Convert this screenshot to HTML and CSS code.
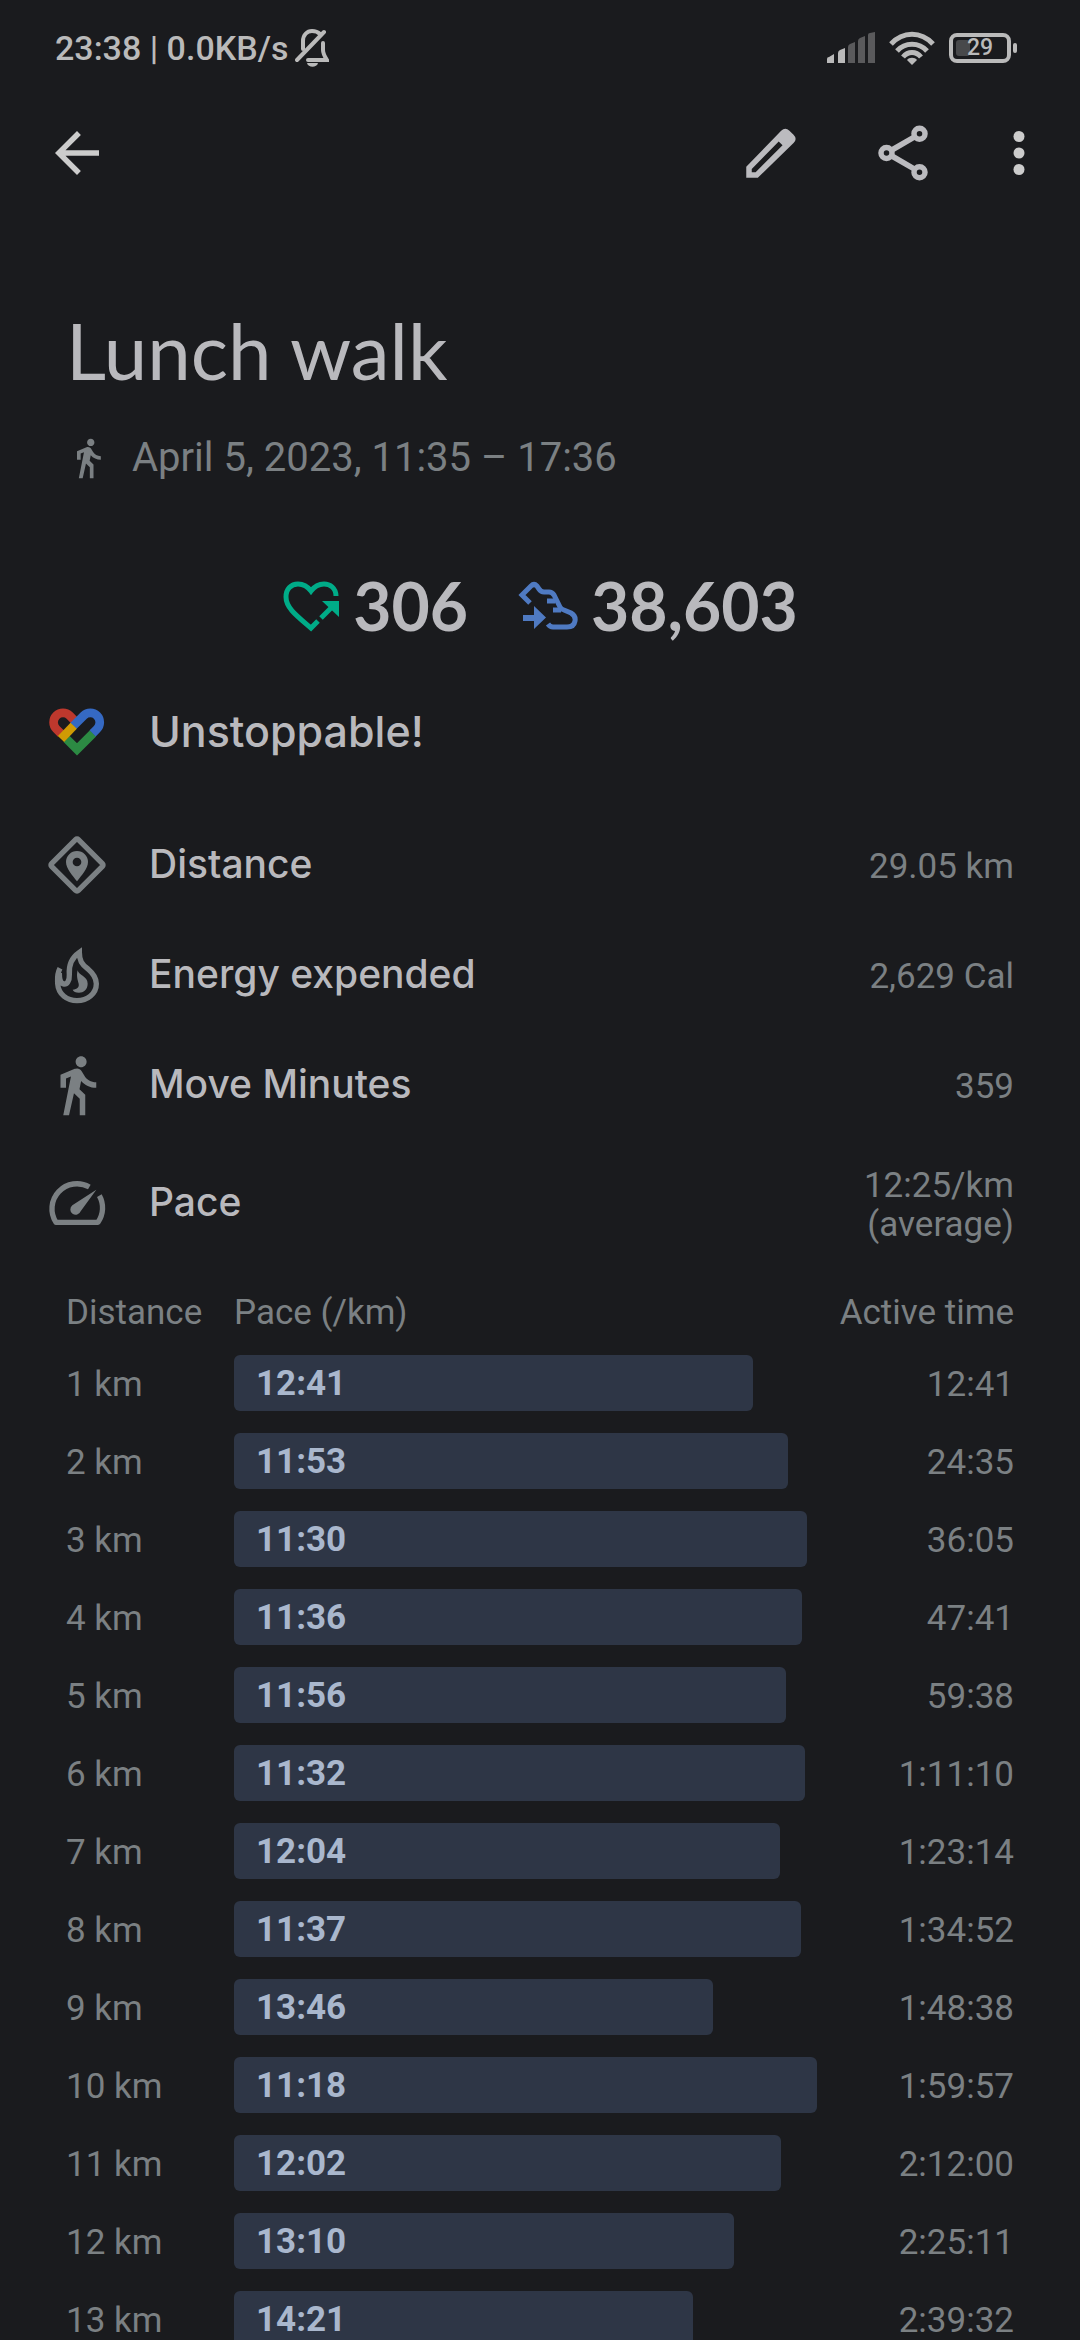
FILE: index.html
```html
<!DOCTYPE html>
<html lang="en">
<head>
    <meta charset="UTF-8">
    <meta name="viewport" content="width=device-width, initial-scale=1.0">
    <title>Lunch walk</title>
    <link rel="stylesheet" href="styles.css">
</head>
<body>
    <!-- Status Bar -->
    <div class="status-bar">
        <div class="status-left">
            <span>23:38 | 0.0KB/s</span>
            <svg class="bell" viewBox="294 29 34 38" fill="none" stroke="currentColor" stroke-width="4" stroke-linecap="round">
                <path d="M302 49V41C302 35 306 31 311 31C315 31 317 32 319 34" />
                <path d="M296 60L323 32" />
                <path d="M322 43V50C322 54 324 57 326 60H307" />
                <path d="M306 63h11c-1 5-10 5-11 0z" fill="currentColor" stroke="none" />
            </svg>
        </div>
        <div class="status-right">
            <svg class="signal" viewBox="0 0 48 32" fill="currentColor">
                <path d="M0 27Q0 25 2 25L7 22V31H0z" />
                <path d="M11 21Q11 19 13 18L18 16V31H11z" />
                <g opacity=".4">
                    <path d="M21 15Q21 13 23 12L28 10V31H21z" />
                    <path d="M31 9Q31 7 33 6L38 4V31H31z" />
                    <path d="M41 3Q41 1 43 1L48 0V31H41z" />
                </g>
            </svg>
            <svg class="wifi" viewBox="0 0 46 34" fill="none" stroke="currentColor" stroke-width="5">
                <path d="M2 13C14 0 32 0 44 13" />
                <path d="M8 20C16 11 30 11 38 20" />
                <path d="M14 26C19 20 27 20 32 26" />
                <path d="M18 29C20 26 26 26 28 29L23 34z" fill="currentColor" stroke="none" />
            </svg>
            <div class="battery"><span class="battery-level"></span><span class="battery-text">29</span></div>
        </div>
    </div>

    <!-- App Bar -->
    <nav class="app-bar">
        <button class="icon-button back" aria-label="Back">
            <svg class="icon" viewBox="0 0 24 24"><path d="M20 11H7.83l5.59-5.59L12 4l-8 8 8 8 1.41-1.41L7.83 13H20v-2z" /></svg>
        </button>
        <button class="icon-button edit" aria-label="Edit">
            <svg class="icon" viewBox="0 0 24 24"><path fill-rule="evenodd" d="M3 21V17L15.7 3.9Q17.2 2.4 18.7 3.9L20.2 5.4Q21.7 6.9 20.2 8.4L7.2 21zM5 17.8V19H6.4L16.2 9.2 14.8 7.8z" /></svg>
        </button>
        <button class="icon-button share" aria-label="Share">
            <svg class="icon" viewBox="0 0 24 24" fill="none" stroke="currentColor" stroke-width="2">
                <circle cx="6" cy="12" r="2" /><circle cx="18" cy="5" r="2" /><circle cx="18" cy="19" r="2" />
                <path d="M7.8 11L16.2 6.1M7.8 13L16.2 17.9" />
            </svg>
        </button>
        <button class="icon-button more" aria-label="More options">
            <svg class="icon" viewBox="0 0 24 24"><circle cx="12" cy="6" r="2" /><circle cx="12" cy="12" r="2" /><circle cx="12" cy="18" r="2" /></svg>
        </button>
    </nav>

    <main>
        <!-- Title -->
        <header class="activity-header">
            <h1>Lunch walk</h1>
            <div class="activity-date">
                <svg class="small-icon" viewBox="0 0 24 24"><path d="M13.5 5.5c1.1 0 2-.9 2-2s-.9-2-2-2-2 .9-2 2 .9 2 2 2zM9.8 8.9L7 23h2.1l1.8-8 2.1 2v6h2v-7.5l-2.1-2 .6-3C14.8 12 16.8 13 19 13v-2c-1.9 0-3.5-1-4.3-2.4l-1-1.6c-.4-.6-1-1-1.7-1-.3 0-.5.1-.8.1L6 8.3V13h2V9.6l1.8-.7" /></svg>
                <span>April 5, 2023, 11:35 – 17:36</span>
            </div>
        </header>

        <!-- Heart Points and Steps -->
        <div class="points">
            <div class="point">
                <svg class="heart-points" viewBox="0 0 58 52" fill="none" stroke="currentColor" stroke-width="5">
                    <path d="M54 16C54 8 48 4 42 4C36 4 32 7 29 11C26 7 22 4 16 4C9 4 4 9 4 17C4 28 15 36 29 48L36 41" />
                    <path d="M39 38L52 25" />
                    <path d="M40 21H57V37z" fill="currentColor" stroke="none" />
                </svg>
                <span>306</span>
            </div>
            <div class="point">
                <svg class="steps" viewBox="0 0 60 50" fill="none" stroke="currentColor" stroke-width="5">
                    <path d="M12 22L4 14L13 5Q16 2 19 5L21 8Q23 11 26 11H31Q34 11 36 14L42 26Q43 28 46 29L53 32Q58 35 57 40Q56 46 49 46H35Q32 46 30 43" />
                    <path d="M29 20H37M35 29H43" />
                    <path d="M5 34H16V25L28 36.5L16 48V40H5z" fill="currentColor" stroke="none" />
                </svg>
                <span>38,603</span>
            </div>
        </div>

        <!-- Metrics -->
        <section class="metrics">
            <div class="metric headline">
                <svg class="icon" viewBox="42 64 198 198" fill="none" stroke-width="26">
                    <path stroke="#bd382d" d="M93 168L79 154A28 28 0 0 1 119 114L133 128" />
                    <path stroke="#2c8a43" d="M110 184L141 215L189 167" />
                    <path stroke="#3569c3" d="M130 145L161 114A28 28 0 0 1 201 154L188 167" />
                    <path stroke="#d09b04" d="M131 144L93 184" />
                </svg>
                <h2>Unstoppable!</h2>
            </div>
            <div class="metric">
                <svg class="icon" viewBox="42 456 198 198">
                    <rect x="84" y="498" width="114" height="114" rx="6" transform="rotate(45 141 555)" fill="none" stroke="currentColor" stroke-width="16" />
                    <path fill-rule="evenodd" d="M141 604C128 587 108 566 108 546a33 33 0 0 1 66 0C174 566 154 587 141 604zM141 533a13 13 0 1 0 0 26a13 13 0 0 0 0-26z" />
                </svg>
                <h3>Distance</h3>
                <span class="value">29.05 km</span>
            </div>
            <div class="metric">
                <svg class="icon" viewBox="42 787 198 198">
                    <path fill="none" stroke="currentColor" stroke-width="16" d="M90 866C80 885 83 900 83 912C85 945 112 963 141 963C172 963 199 942 199 912C199 893 188 880 174 868C155 854 148 842 148 818C122 836 116 860 118 885C119 905 110 914 102 913C92 912 88 903 88 880" />
                    <path d="M143 872C146 887 173 890 173 912C173 930 160 939 147 939C137 939 130 935 128 930C142 928 148 922 146 912C144 903 138 890 143 872z" />
                </svg>
                <h3>Energy expended</h3>
                <span class="value">2,629 Cal</span>
            </div>
            <div class="metric">
                <svg class="icon" viewBox="0 0 24 24"><path d="M13.5 5.5c1.1 0 2-.9 2-2s-.9-2-2-2-2 .9-2 2 .9 2 2 2zM9.8 8.9L7 23h2.1l1.8-8 2.1 2v6h2v-7.5l-2.1-2 .6-3C14.8 12 16.8 13 19 13v-2c-1.9 0-3.5-1-4.3-2.4l-1-1.6c-.4-.6-1-1-1.7-1-.3 0-.5.1-.8.1L6 8.3V13h2V9.6l1.8-.7" /></svg>
                <h3>Move Minutes</h3>
                <span class="value">359</span>
            </div>
            <div class="metric pace">
                <svg class="icon" viewBox="42 480 198 198">
                    <path fill="none" stroke="currentColor" stroke-width="16" stroke-linejoin="round" d="M178 531A75 75 0 0 0 78 637H204A75 75 0 0 0 208 557" />
                    <path d="M199 539L152 604A16 16 0 1 1 127 586z" />
                </svg>
                <h3>Pace</h3>
                <span class="value">12:25/km<br>(average)</span>
            </div>
        </section>

        <!-- Splits -->
        <table class="splits">
            <thead>
                <tr>
                    <th class="col-distance">Distance</th>
                    <th>Pace (/km)</th>
                    <th class="col-time">Active time</th>
                </tr>
            </thead>
            <tbody id="splits-body">
                <!-- Split rows will be dynamically added here -->
            </tbody>
        </table>
    </main>

    <script>
        const splits = [
            { pace: "12:41", time: "12:41" },
            { pace: "11:53", time: "24:35" },
            { pace: "11:30", time: "36:05" },
            { pace: "11:36", time: "47:41" },
            { pace: "11:56", time: "59:38" },
            { pace: "11:32", time: "1:11:10" },
            { pace: "12:04", time: "1:23:14" },
            { pace: "11:37", time: "1:34:52" },
            { pace: "13:46", time: "1:48:38" },
            { pace: "11:18", time: "1:59:57" },
            { pace: "12:02", time: "2:12:00" },
            { pace: "13:10", time: "2:25:11" },
            { pace: "14:21", time: "2:39:32" },
        ];

        function toSeconds(pace) {
            const [min, sec] = pace.split(':').map(Number);
            return min * 60 + sec;
        }

        // The fastest split fills the whole column
        const fastest = Math.min(...splits.map(split => toSeconds(split.pace)));
        const splitsBody = document.getElementById('splits-body');
        splits.forEach((split, index) => {
            const width = fastest / toSeconds(split.pace) * 100;
            const row = splitsBody.insertRow();
            row.innerHTML = `
                <td>${index + 1} km</td>
                <td class="col-pace"><div class="bar" style="width: ${width}%">${split.pace}</div></td>
                <td class="col-time">${split.time}</td>
            `;
        });
    </script>
</body>
</html>
```
FILE: styles.css
```css
/* General Styles */
* {
    margin: 0;
    padding: 0;
    box-sizing: border-box;
}

body {
    background-color: #1a1b1e;
    color: #7b8083;
    font-family: Roboto, sans-serif;
    font-size: 35px;
    line-height: 39px;
    height: 100vh;
    overflow: hidden;
}

svg {
    display: block;
    flex-shrink: 0;
}

.icon {
    width: 66px;
    height: 66px;
    fill: currentColor;
}

.icon[fill="none"] {
    fill: none;
}

/* Status Bar */
.status-bar {
    display: flex;
    align-items: center;
    justify-content: space-between;
    height: 96px;
    padding: 0 63px 0 55px;
    color: #bababa;
    font-size: 34px;
    font-weight: 500;
}

.status-left {
    display: flex;
    align-items: center;
    gap: 7px;
}

.bell {
    width: 34px;
    height: 38px;
}

.status-right {
    display: flex;
    align-items: center;
    gap: 14px;
}

.signal {
    width: 48px;
    height: 32px;
}

.wifi {
    width: 46px;
    height: 34px;
}

.battery {
    position: relative;
    display: flex;
    align-items: center;
    justify-content: center;
    width: 62px;
    height: 30px;
    margin-right: 6px;
    border: 4px solid currentColor;
    border-radius: 8px;
    font-size: 23px;
    line-height: 24px;
}

.battery::after {
    content: '';
    position: absolute;
    right: -10px;
    top: 6px;
    width: 4px;
    height: 10px;
    border-radius: 2px;
    background: currentColor;
}

.battery-level {
    position: absolute;
    left: 3px;
    top: 3px;
    width: 14px;
    height: 16px;
    border-radius: 3px;
    background: #48494b;
}

.battery-text {
    position: relative;
}

/* App Bar */
.app-bar {
    display: flex;
    align-items: center;
    height: 114px;
    padding: 0 11px;
}

.icon-button {
    padding: 33px;
    background: transparent;
    border: none;
    color: #bbbbbf;
    cursor: pointer;
}

.icon-button.back {
    margin-right: auto;
    color: #cccccc;
}

.icon-button.more {
    padding: 33px 17px;
    color: #cccccc;
}

/* Title */
.activity-header {
    padding: 92px 66px 0;
}

h1,
.points {
    font-family: Lato, sans-serif;
    color: #b9b9bd;
}

h1 {
    font-size: 78px;
    font-weight: 400;
    line-height: 96px;
}

.activity-date {
    display: flex;
    align-items: center;
    gap: 22px;
    margin-top: 34px;
    font-size: 40px;
    line-height: 52px;
}

.small-icon {
    width: 44px;
    height: 44px;
    fill: currentColor;
}

/* Heart Points and Steps */
.points {
    display: flex;
    justify-content: center;
    gap: 50px;
    margin-top: 90px;
    font-size: 66px;
    font-weight: 700;
    line-height: 64px;
}

.point {
    display: flex;
    align-items: center;
    gap: 13px;
}

.heart-points {
    width: 58px;
    height: 52px;
    color: #00ac88;
}

.steps {
    width: 60px;
    height: 50px;
    color: #4f7ac2;
}

/* Metrics */
.metrics {
    margin-top: 39px;
    padding: 0 66px 0 44px;
}

.metric {
    display: flex;
    align-items: center;
    gap: 39px;
    height: 110px;
}

.metric.headline {
    margin-bottom: 23px;
}

.metric.pace {
    height: 126px;
}

h2,
h3 {
    padding-bottom: 2px;
    font-family: Inter, sans-serif;
    font-weight: 500;
    line-height: 52px;
    color: #b9b9bd;
}

h2 {
    font-size: 43px;
}

h3 {
    font-size: 39px;
}

.value {
    margin-left: auto;
    padding-top: 3px;
    text-align: right;
}

/* Splits */
.splits {
    width: calc(100% - 132px);
    margin: 14px 66px 0;
    table-layout: fixed;
    border-collapse: collapse;
}

.splits th {
    height: 64px;
    font-weight: 400;
    text-align: left;
}

.splits td {
    height: 78px;
    padding-top: 2px;
}

.splits .col-distance {
    width: 168px;
}

.splits .col-pace {
    padding-top: 0;
}

.splits .col-time {
    width: 197px;
    text-align: right;
}

.bar {
    height: 56px;
    padding-left: 22px;
    border-radius: 6px;
    background: #2e3646;
    color: #a9b7cd;
    font-weight: 700;
    line-height: 58px;
}
```
